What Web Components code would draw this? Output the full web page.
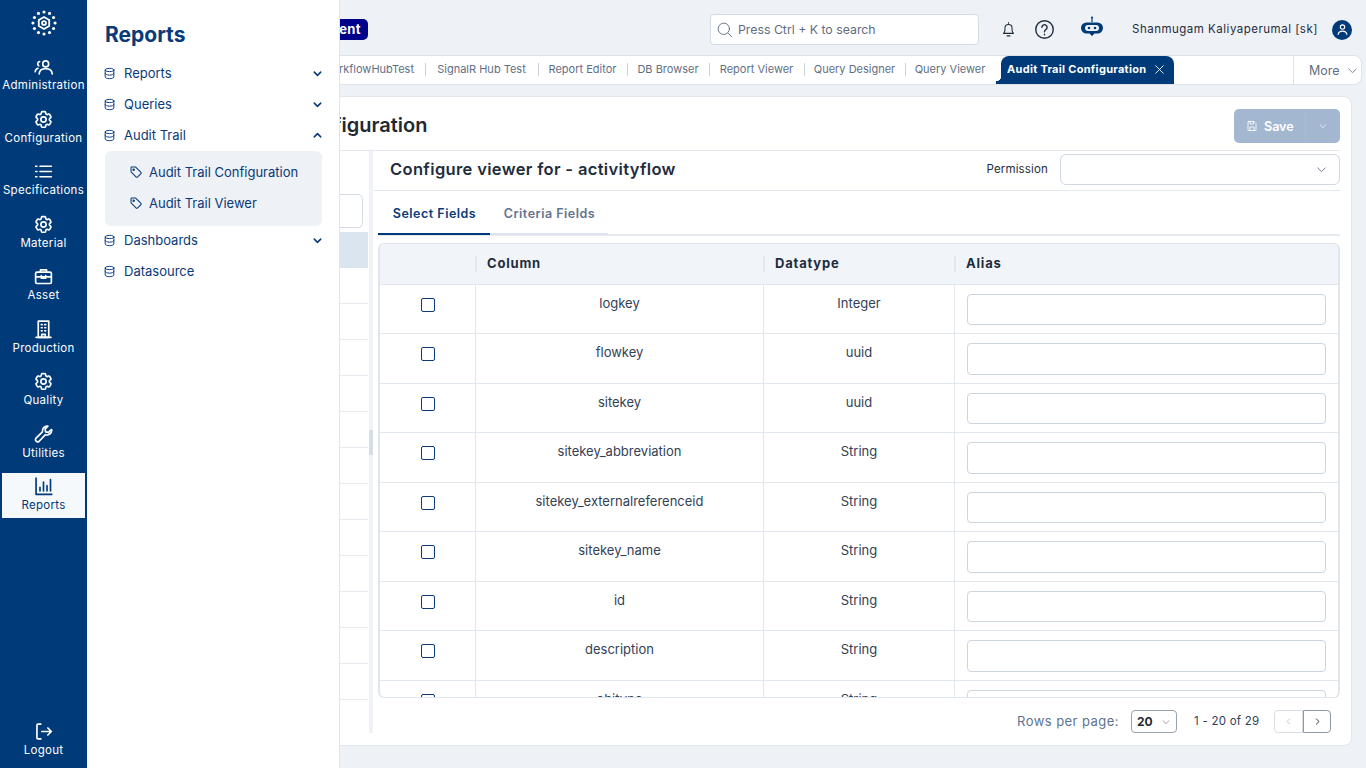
<!DOCTYPE html>
<html lang="en">
<head>
<meta charset="utf-8">
<title>Audit Trail Configuration</title>
<style>
  html, body { margin: 0; height: 100%; }
  body { font-family: Inter, "Open Sans", sans-serif; background: #eef1f6; overflow: hidden; }
  app-shell { height: 768px; }
</style>
</head>
<body>
<app-shell>
  <side-rail slot="rail">
    <rail-item icon="users">Administration</rail-item>
    <rail-item icon="gear">Configuration</rail-item>
    <rail-item icon="list">Specifications</rail-item>
    <rail-item icon="gear">Material</rail-item>
    <rail-item icon="briefcase">Asset</rail-item>
    <rail-item icon="building">Production</rail-item>
    <rail-item icon="gear">Quality</rail-item>
    <rail-item icon="wrench">Utilities</rail-item>
    <rail-item icon="chart" active>Reports</rail-item>
    <rail-item icon="logout" slot="bottom">Logout</rail-item>
  </side-rail>

  <fly-menu slot="menu" heading="Reports">
    <menu-row icon="db" chevron="down">Reports</menu-row>
    <menu-row icon="db" chevron="down">Queries</menu-row>
    <menu-row icon="db" chevron="up">Audit Trail</menu-row>
    <menu-group>
      <menu-row icon="tag" sub>Audit Trail Configuration</menu-row>
      <menu-row icon="tag" sub>Audit Trail Viewer</menu-row>
    </menu-group>
    <menu-row icon="db" chevron="down">Dashboards</menu-row>
    <menu-row icon="db">Datasource</menu-row>
  </fly-menu>

  <top-bar slot="top"></top-bar>
  <tab-strip slot="top"></tab-strip>
  <config-card slot="main"></config-card>
</app-shell>

<script>
// Icon set, all drawn on a 24 unit box
const GEAR = '<path d="M9.600 3.900c.1-.5.6-.9 1.100-.9h2.600c.5 0 1 .4 1.100.9l.2 1.300c.1.400.3.700.6.900l.2.100c.3.200.7.300 1.100.100l1.200-.5c.5-.2 1.100 0 1.400.5l1.300 2.300c.3.500.2 1.100-.3 1.400l-1 .8c-.3.200-.4.600-.4 1v.3c0 .4.100.7.4 1l1 .8c.4.400.5 1 .3 1.400l-1.300 2.300c-.3.500-.9.700-1.400.5l-1.200-.5c-.4-.1-.8-.1-1.100.1l-.2.1c-.3.200-.6.500-.6.900l-.2 1.300c-.1.500-.6.900-1.100.9h-2.600c-.5 0-1-.4-1.100-.9l-.2-1.300c-.1-.4-.3-.7-.6-.9l-.2-.1c-.3-.2-.7-.3-1.100-.1l-1.200.5c-.5.2-1.100 0-1.400-.5l-1.300-2.300c-.3-.5-.2-1.100.3-1.400l1-.8c.3-.2.4-.6.4-1v-.3c0-.4-.1-.7-.4-1l-1-.8c-.4-.4-.5-1-.3-1.400l1.300-2.300c.3-.5.9-.7 1.400-.5l1.200.5c.4.100.8.100 1.100-.1l.2-.1c.3-.2.6-.5.6-.9z"/><circle cx="12" cy="12" r="3"/>';
const ICONS = {
  gear: GEAR,
  users: '<circle cx="14.500" cy="9" r="3.400"/><path d="M7 20.500c.3-3.800 3.200-6 7.500-6s7.200 2.200 7.500 6"/><path d="M7.500 6.500a2.500 2.500 0 0 0-1 4.600M2.500 18c.2-2 1.400-3.400 3.200-4"/>',
  list: '<path d="M8 6h13M8 12h13M8 18h13"/><path d="M3 6h1.500M3 12h1.500M3 18h1.500"/>',
  briefcase: '<rect x="3" y="7" width="18" height="13" rx="1.500"/><path d="M8.500 7V4.500h7V7M3 12.500h18M9.500 11v3h5v-3"/>',
  building: '<rect x="6" y="2.500" width="12" height="18.500"/><path d="M3.500 21h17M9.500 6.500h1M13.500 6.500h1M9.500 10h1M13.500 10h1M9.500 13.500h1M13.500 13.500h1M10 21v-3.500h4V21"/>',
  wrench: '<path d="M21.500 7a5.500 5.500 0 0 1-7.300 5.200L6.800 20a2.600 2.600 0 0 1-3.600-3.600l7.600-7.400A5.500 5.500 0 0 1 17 2.500l-3.200 3.300.6 3.200 3.200.6L21 6.300c.3.200.5.400.5.700z"/>',
  chart: '<path d="M3.500 2.500V21h18M8 17v-4M12 17V7M16 17v-6M20 17V4"/>',
  logout: '<path d="M9 3.500H5.500a1 1 0 0 0-1 1v15a1 1 0 0 0 1 1H9M10 12h11M17 8l4 4-4 4"/>',
  db: '<ellipse cx="12" cy="5.500" rx="8" ry="3"/><path d="M4 5.500v13c0 1.700 3.600 3 8 3s8-1.300 8-3v-13M4 12c0 1.700 3.600 3 8 3s8-1.300 8-3"/>',
  tag: '<path d="M3.500 4.500a1 1 0 0 1 1-1h7l9 9a1.500 1.500 0 0 1 0 2.100l-6 6a1.500 1.500 0 0 1-2.100 0l-8.900-9z"/><circle cx="8" cy="8" r="1.200"/>',
  down: '<path d="M5 9l7 7 7-7"/>',
  up: '<path d="M5 15l7-7 7 7"/>',
  left: '<path d="M15 5l-7 7 7 7"/>',
  right: '<path d="M9 5l7 7-7 7"/>',
  close: '<path d="M5 5l14 14M19 5L5 19"/>',
  search: '<circle cx="11" cy="11" r="8"/><path d="M17 17l5 5"/>',
  bell: '<path d="M5 17.500c1.300-1.300 2-2.500 2-5V10a5 5 0 0 1 10 0v2.500c0 2.500.7 3.700 2 5z"/><path d="M10 21h4M12 3V2"/>',
  help: '<circle cx="12" cy="12" r="10"/><path d="M9 9.500a3 3 0 1 1 4.500 2.600c-1 .6-1.500 1.200-1.500 2.400M12 17.500v.5"/>',
  save: '<path d="M5 3h11l4 4v13a1 1 0 0 1-1 1H5a1 1 0 0 1-1-1V4a1 1 0 0 1 1-1z"/><path d="M8 3v5h7V3M8 21v-7h8v7"/>',
  user: '<circle cx="12" cy="8" r="3.500"/><path d="M5 20c.5-4 3.200-5.500 7-5.500s6.500 1.500 7 5.500"/>'
};

class XIcon extends HTMLElement {
  connectedCallback() {
    const size = this.getAttribute('size') || 20;
    const width = this.getAttribute('stroke') || 1.6;
    this.attachShadow({ mode: 'open' }).innerHTML = `
      <style>:host { display: inline-flex; flex: none; } svg { display: block; }</style>
      <svg width="${size}" height="${size}" viewBox="0 0 24 24" fill="none" stroke="currentColor"
        stroke-width="${width}" stroke-linecap="round" stroke-linejoin="round">${ICONS[this.getAttribute('name')]}</svg>`;
  }
}
customElements.define('x-icon', XIcon);

class AppShell extends HTMLElement {
  connectedCallback() {
    this.attachShadow({ mode: 'open' }).innerHTML = `
      <style>
        :host { display: flex; position: relative; overflow: hidden; }
        .content { flex: 1; min-width: 0; display: flex; flex-direction: column; }
        .menu { position: absolute; left: 87px; top: 0; bottom: 0; z-index: 5; }
      </style>
      <slot name="rail"></slot>
      <div class="content"><slot name="top"></slot><slot name="main"></slot></div>
      <div class="menu"><slot name="menu"></slot></div>`;
  }
}
customElements.define('app-shell', AppShell);

class SideRail extends HTMLElement {
  connectedCallback() {
    // ring of dots around a small hexagon
    const ring = (r, n, size, start) => Array.from({ length: n }, (_, i) => {
      const a = start + i * 2 * Math.PI / n;
      return `<circle cx="${12 + r * Math.cos(a)}" cy="${12 + r * Math.sin(a)}" r="${size}" fill="currentColor" stroke="none"/>`;
    }).join('');
    this.attachShadow({ mode: 'open' }).innerHTML = `
      <style>
        :host { display: flex; flex-direction: column; width: 87px; flex: none; box-sizing: border-box;
          background: #003a78; color: #fff; height: 100%; padding: 0 2px 5px; }
        .logo { height: 53px; box-sizing: border-box; padding-top: 10px; display: flex; justify-content: center; }
        .items { display: flex; flex-direction: column; gap: 7.500px; }
        .bottom { margin-top: auto; }
      </style>
      <div class="logo">
        <svg width="26" height="26" viewBox="0 0 24 24" fill="none" stroke="currentColor" stroke-width="1.700">
          ${ring(10.200, 12, 1.450, -Math.PI / 2)}
          <path d="M12 6.500l4.800 2.750v5.500L12 17.500l-4.800-2.750v-5.500z"/><circle cx="12" cy="12" r="1.800"/>
        </svg>
      </div>
      <div class="items"><slot></slot></div>
      <div class="bottom"><slot name="bottom"></slot></div>`;
  }
}
customElements.define('side-rail', SideRail);

class RailItem extends HTMLElement {
  connectedCallback() {
    this.attachShadow({ mode: 'open' }).innerHTML = `
      <style>
        :host { display: flex; flex-direction: column; align-items: center; height: 45px; box-sizing: border-box;
          padding-top: 3px; font-size: 11.500px; line-height: 16px; letter-spacing: .3px; color: #fff; white-space: nowrap; }
        :host([active]) { background: #f5f9fc; color: #003a78; }
      </style>
      <x-icon name="${this.getAttribute('icon')}" size="21" stroke="1.900"></x-icon>
      <span><slot></slot></span>`;
  }
}
customElements.define('rail-item', RailItem);

class FlyMenu extends HTMLElement {
  connectedCallback() {
    this.attachShadow({ mode: 'open' }).innerHTML = `
      <style>
        :host { display: block; width: 253px; height: 100%; box-sizing: border-box; background: #fff;
          border-right: 1px solid #dfe5ec; padding: 21px 16px 0 16px; color: #0a3a78; }
        h2 { margin: 0 0 9px 2px; font-size: 21px; line-height: 28px; font-weight: 700; }
        .rows { display: flex; flex-direction: column; }
      </style>
      <h2>${this.getAttribute('heading')}</h2>
      <div class="rows"><slot></slot></div>`;
  }
}
customElements.define('fly-menu', FlyMenu);

class MenuRow extends HTMLElement {
  connectedCallback() {
    const chevron = this.getAttribute('chevron');
    const sub = this.hasAttribute('sub');
    this.attachShadow({ mode: 'open' }).innerHTML = `
      <style>
        :host { display: flex; align-items: center; height: 31px; box-sizing: border-box; padding-bottom: 1px; font-size: 13px; color: #0a3a78; gap: 8px; white-space: nowrap; }
        :host([sub]) { padding-left: 24px; gap: 6px; }
        .grow { flex: 1; }
      </style>
      <x-icon name="${this.getAttribute('icon')}" size="${sub ? 14 : 13}" stroke="1.800"></x-icon>
      <span class="grow"><slot></slot></span>
      ${chevron ? `<x-icon name="${chevron}" size="11" stroke="3.400"></x-icon>` : ''}`;
  }
}
customElements.define('menu-row', MenuRow);

class MenuGroup extends HTMLElement {
  connectedCallback() {
    this.attachShadow({ mode: 'open' }).innerHTML = `
      <style>
        :host { display: block; background: #eef1f6; border-radius: 6px; margin: 0 1px -1px 2px; padding: 6px 0 7px;
          height: 75px; box-sizing: border-box; }
      </style>
      <slot></slot>`;
  }
}
customElements.define('menu-group', MenuGroup);

class TopBar extends HTMLElement {
  connectedCallback() {
    this.attachShadow({ mode: 'open' }).innerHTML = `
      <style>
        :host { display: flex; align-items: center; height: 55px; flex: none; padding: 0 14px 0 0; box-sizing: border-box;
          color: #1f2d3d; }
        .badge { margin-left: 200px; width: 81px; height: 21px; box-sizing: border-box; background: #00008b; color: #fff;
          border-radius: 5px; font-size: 13px; font-weight: 700; text-align: right; padding-right: 7px; line-height: 20px; margin-top: 4px; letter-spacing: .4px; }
        .search { margin-left: 342px; width: 269px; height: 31px; box-sizing: border-box; background: #fff; border: 1px solid #d3dbe6;
          border-radius: 4px; display: flex; align-items: center; padding-left: 5px; gap: 5px; color: #5f6d80; font-size: 12.300px; margin-top: 4px; }
        .bell { margin-left: 21px; margin-top: 3px; }
        .help { margin-left: 17px; margin-top: 3px; }
        .bot { margin-left: 25px; margin-top: 1px; color: #003a78; }
        .name { margin-left: 28px; font-size: 11.500px; letter-spacing: .5px; white-space: nowrap; margin-top: 3px; width: 200px; }
        .avatar { width: 20px; height: 20px; border-radius: 50%; background: #003a78; color: #fff; display: flex;
          align-items: center; justify-content: center; margin-top: 4px; }
      </style>
      <span class="badge">ent</span>
      <div class="search"><x-icon name="search" size="17" stroke="1.300"></x-icon><span>Press Ctrl + K to search</span></div>
      <x-icon class="bell" name="bell" size="17" stroke="1.500"></x-icon>
      <x-icon class="help" name="help" size="21" stroke="1.600"></x-icon>
      <svg class="bot" width="24" height="24" viewBox="0 0 24 24">
        <path d="M12 1v5" stroke="currentColor" stroke-width="1.200"/><circle cx="12" cy="1.500" r="1" fill="currentColor"/>
        <path d="M6.500 6.500h11a5.500 5.500 0 0 1 0 11H14.500L12 20l-2.500-2.500h-3a5.500 5.500 0 0 1 0-11z" fill="currentColor"/>
        <rect x="5" y="9" width="14" height="6" rx="3" fill="#eef1f6"/>
        <circle cx="9" cy="12" r="1.300" fill="currentColor"/><circle cx="15" cy="12" r="1.300" fill="currentColor"/>
      </svg>
      <span class="name">Shanmugam Kaliyaperumal [sk]</span>
      <span class="avatar"><x-icon name="user" size="15" stroke="1.800"></x-icon></span>`;
  }
}
customElements.define('top-bar', TopBar);

class TabStrip extends HTMLElement {
  connectedCallback() {
    // widths run from one divider to the next, as in the reference
    const tabs = [['WorkflowHubTest', 130], ['SignalR Hub Test', 113], ['Report Editor', 89], ['DB Browser', 82], ['Report Viewer', 95], ['Query Designer', 101], ['Query Viewer', 90]];
    this.attachShadow({ mode: 'open' }).innerHTML = `
      <style>
        :host { display: flex; align-items: stretch; height: 30px; flex: none; box-sizing: border-box; margin: 0 4px 0 8px;
          background: #fff; border: 1px solid #dde3eb; border-radius: 0 8px 8px 0; padding-left: 199px; font-size: 11px; color: #5f6f86; }
        .tab { display: flex; align-items: center; justify-content: center; white-space: nowrap; position: relative; flex: none; padding-bottom: 2px; box-sizing: border-box; }
        .tab + .tab::before { content: ""; position: absolute; left: 0; top: 7px; height: 13px; width: 1px; background: #ccd3dd; }
        .first { justify-content: flex-end; padding-right: 11px; }
        .active { position: relative; width: 173px; margin-left: 6px; background: #003a78; color: #fff; font-weight: 700; border-radius: 8px 8px 0 0;
          padding: 0 0 2px 6px; box-sizing: border-box; gap: 7px; letter-spacing: .3px; flex: none; display: flex; align-items: center; }
        /* little flare at the foot of the active tab */
        .active::before { content: ""; position: absolute; left: -5px; bottom: 0; width: 5px; height: 8px;
          background: radial-gradient(circle at 0 0, transparent 5px, #003a78 5.500px); }
        .more { margin-left: auto; width: 68px; box-sizing: border-box; border-left: 1px solid #dde3eb; display: flex; align-items: center;
          gap: 6px; padding-left: 15px; font-size: 12.500px; }
      </style>
      ${tabs.map(([text, w], i) => `<div class="tab ${i ? '' : 'first'}" style="width:${w}px">${text}</div>`).join('')}
      <div class="active"><span>Audit Trail Configuration</span><x-icon name="close" size="13" stroke="1.600"></x-icon></div>
      <div class="more"><span>More</span><x-icon name="down" size="13" stroke="1.500"></x-icon></div>`;
  }
}
customElements.define('tab-strip', TabStrip);

class ConfigCard extends HTMLElement {
  connectedCallback() {
    const rows = Array.from({ length: 14 }, (_, i) => `<div class="item ${i === 0 ? 'sel' : ''}"></div>`).join('');
    this.attachShadow({ mode: 'open' }).innerHTML = `
      <style>
        :host { display: flex; flex-direction: column; height: 650px; box-sizing: border-box; margin: 11px 14px 0 10px; background: #fff;
          border: 1px solid #e2e7ee; border-radius: 8px; padding: 0 11px 0 0; flex: none; color: #1f2d3d; }
        .title { height: 54px; flex: none; box-sizing: border-box; padding-top: 5px; border-bottom: 1px solid #e3e8ef; display: flex; align-items: center;
          justify-content: space-between; }
        h1 { margin: 0 0 2px 93px; font-size: 20px; font-weight: 600; white-space: nowrap; color: #1f2933; }
        .save { display: flex; width: 106px; height: 34px; border-radius: 5px; background: #a3b7d1; color: #fff; font-size: 12.500px; font-weight: 600; }
        .save div { display: flex; align-items: center; }
        .save .l { width: 72px; box-sizing: border-box; padding-left: 12px; gap: 6px; border-right: 1px solid #a9bcd4; }
        .save .r { flex: 1; justify-content: center; }
        .body { flex: 1; display: flex; min-height: 0; align-items: flex-start; }
        .left { width: 270px; height: 582px; overflow: hidden; flex: none; display: flex; flex-direction: column; }
        .filter { margin: 43px 5px 4px 20px; height: 34px; flex: none; border: 1px solid #d3dbe6; border-radius: 5px; box-sizing: border-box; }
        .item { height: 36px; flex: none; border-bottom: 1px solid #e6ebf1; box-sizing: border-box; }
        .item.sel { background: #dbe5f0; border: 0; }
        .split { width: 4px; height: 582px; flex: none; background: #eff2f7; position: relative; margin-left: 1px; }
        .split::after { content: ""; position: absolute; left: 0; right: 0; top: 279px; height: 25px; background: #d5dde8; }
        .right { flex: 1; min-width: 0; display: flex; flex-direction: column; }
        .head { height: 40px; flex: none; box-sizing: border-box; border-bottom: 1px solid #e3e8ef; display: flex; align-items: center;
          padding: 0 0 3px 16px; margin-left: 1px; }
        .head strong { font-size: 16.500px; letter-spacing: .35px; font-weight: 600; flex: 1; white-space: nowrap; }
        .head label { font-size: 11.500px; letter-spacing: .15px; color: #1f2d3d; margin-right: 12px; }
        .pick { width: 280px; height: 31px; box-sizing: border-box; border: 1px solid #cfd8e3; border-radius: 6px; display: flex; align-items: center;
          justify-content: flex-end; padding-right: 11px; color: #5f6d80; }
        .tabs { height: 45px; flex: none; box-sizing: border-box; margin-left: 5px; border-bottom: 2px solid #e6ebf2; display: flex; font-size: 12.500px;
          font-weight: 600; letter-spacing: .5px; color: #64748b; }
        .tabs span { display: flex; align-items: center; justify-content: center; box-sizing: border-box; height: 44px; padding: 3px 0 0 1px; }
        .tabs .on { width: 112px; color: #0a3a78; border-bottom: 2px solid #003a78; }
        .tabs .off { width: 118px; border-bottom: 2px solid #dce4ef; }
        field-table { margin: 7px 0 0 5px; }
      </style>
      <div class="title">
        <h1>Audit Trail Configuration</h1>
        <div class="save">
          <div class="l"><x-icon name="save" size="12" stroke="1.700"></x-icon>Save</div>
          <div class="r"><x-icon name="down" size="10" stroke="1.700"></x-icon></div>
        </div>
      </div>
      <div class="body">
        <div class="left"><div class="filter"></div>${rows}</div>
        <div class="split"></div>
        <div class="right">
          <div class="head">
            <strong>Configure viewer for - activityflow</strong>
            <label>Permission</label>
            <div class="pick"><x-icon name="down" size="13" stroke="1.600"></x-icon></div>
          </div>
          <div class="tabs"><span class="on">Select Fields</span><span class="off">Criteria Fields</span></div>
          <field-table></field-table>
          <table-pager></table-pager>
        </div>
      </div>`;
  }
}
customElements.define('config-card', ConfigCard);

class FieldTable extends HTMLElement {
  connectedCallback() {
    const fields = [['logkey', 'Integer'], ['flowkey', 'uuid'], ['sitekey', 'uuid'], ['sitekey_abbreviation', 'String'],
      ['sitekey_externalreferenceid', 'String'], ['sitekey_name', 'String'], ['id', 'String'], ['description', 'String'], ['objtype', 'String']];
    this.attachShadow({ mode: 'open' }).innerHTML = `
      <style>
        :host { display: block; height: 455px; flex: none; box-sizing: border-box; overflow: hidden; border: 1px solid #dfe6ee;
          border-left-width: 2px; border-right-width: 2px; border-radius: 6px; font-size: 13px; color: #334155; }
        .row { display: grid; grid-template-columns: 95px 288px 191px 1fr; height: 49.500px; box-sizing: border-box; border-bottom: 1px solid #e1e7ef; }
        .row.hd { height: 40.750px; background: #f1f4f9; font-weight: 700; color: #1f2d3d; letter-spacing: .8px; align-items: center; border-bottom: 1px solid #dfe6ee; }
        .hd div { height: 16px; line-height: 15px; box-sizing: border-box; padding-left: 10px; border-left: 2px solid #e3e8ef; }
        .hd div:first-child { border: 0; }
        .cell { border-left: 1px solid #e1e7ef; text-align: center; padding-top: 9px; box-sizing: border-box; line-height: 18px; }
        .cell:first-child { border: 0; display: flex; justify-content: center; padding: 13px 0 0 0; }
        .box { width: 14px; height: 14px; box-sizing: border-box; border: 1.500px solid #0a3a78; border-radius: 2px; }
        .alias { padding: 9px 12px 0 12px; }
        .alias div { height: 31.500px; box-sizing: border-box; border: 1px solid #cbd5e1; border-radius: 4px; }
      </style>
      <div class="row hd"><div></div><div>Column</div><div>Datatype</div><div>Alias</div></div>
      ${fields.map(([name, type]) => `
        <div class="row">
          <div class="cell"><span class="box"></span></div>
          <div class="cell">${name}</div>
          <div class="cell">${type}</div>
          <div class="cell alias"><div></div></div>
        </div>`).join('')}`;
  }
}
customElements.define('field-table', FieldTable);

class TablePager extends HTMLElement {
  connectedCallback() {
    this.attachShadow({ mode: 'open' }).innerHTML = `
      <style>
        :host { display: flex; align-items: center; justify-content: flex-end; height: 47px; padding: 0 9px 0 0; flex: none; box-sizing: border-box;
          font-size: 13px; color: #5f7290; }
        .label { letter-spacing: .45px; padding-bottom: 2px; }
        .size { margin-left: 12px; width: 46px; height: 23px; box-sizing: border-box; border: 1px solid #9aa3ae; border-radius: 4px; display: flex; align-items: center;
          justify-content: space-between; padding: 0 5px; font-size: 12px; font-weight: 700; color: #1f2933; }
        .size x-icon { color: #667; }
        .count { margin-left: 17px; width: 80px; padding-bottom: 2px; font-size: 11.500px; letter-spacing: .25px; color: #334155; white-space: nowrap; }
        .btn { width: 29px; height: 23px; box-sizing: border-box; display: flex; align-items: center; justify-content: center; border: 1px solid #d9dde3; color: #b5bcc6; border-radius: 4px 0 0 4px; }
        .btn.next { width: 28px; border-color: #8f98a3; color: #1f2933; border-radius: 0 4px 4px 0; border-left: 1px solid #8f98a3; }
      </style>
      <span class="label">Rows per page:</span>
      <div class="size"><span>20</span><x-icon name="down" size="10" stroke="1.600"></x-icon></div>
      <span class="count">1 - 20 of 29</span>
      <div class="btn"><x-icon name="left" size="9" stroke="2.200"></x-icon></div>
      <div class="btn next"><x-icon name="right" size="9" stroke="2.400"></x-icon></div>`;
  }
}
customElements.define('table-pager', TablePager);
</script>
</body>
</html>
